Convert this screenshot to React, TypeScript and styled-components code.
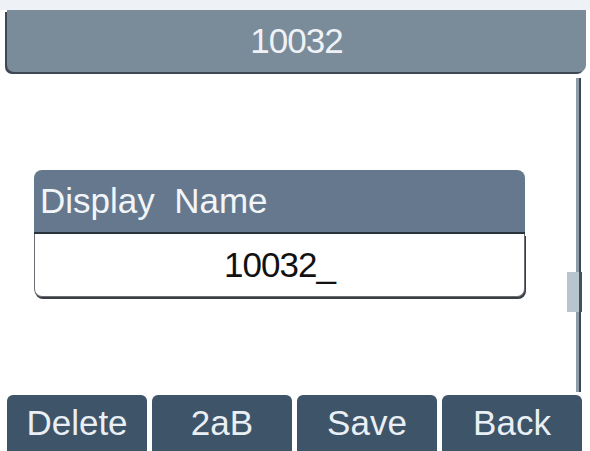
import styled, { createGlobalStyle } from 'styled-components';

const GlobalStyle = createGlobalStyle`
  html, body {
    margin: 0;
    padding: 0;
    background: #ffffff;
  }
  body {
    font-family: 'Liberation Sans', Arial, sans-serif;
  }
`;

const softKeys = ['Delete', '2aB', 'Save', 'Back'];

const App = () => {
  return (
    <>
      <GlobalStyle />
      <Screen>
        <TitleBar>10032</TitleBar>
        <Content>
          <Main>
            <InputBox>
              <InputLabel>{'Display  Name'}</InputLabel>
              <InputField>10032_</InputField>
            </InputBox>
          </Main>
          <ScrollColumn>
            <ScrollTrack>
              <ScrollThumb />
            </ScrollTrack>
          </ScrollColumn>
        </Content>
        <SoftKeyRow>
          {softKeys.map((key) => (
            <SoftKey key={key}>{key}</SoftKey>
          ))}
        </SoftKeyRow>
      </Screen>
    </>
  );
};

export default App;

const Screen = styled.div`
  width: 590px;
  height: 451px;
  display: flex;
  flex-direction: column;
  background: linear-gradient(#eef2f7 0 10px, #ffffff 10px);
  overflow: hidden;
`;

const TitleBar = styled.div`
  margin: 10px 4px 0 7px;
  height: 62px;
  display: flex;
  align-items: center;
  justify-content: center;
  background: #7a8b99;
  border-radius: 0 0 7px 7px;
  box-shadow: -2px 2px 0 #3e4852;
  color: #eef2f6;
  font-size: 35px;
  letter-spacing: -1px;
`;

const Content = styled.div`
  flex: 1;
  display: flex;
`;

const Main = styled.div`
  flex: 1;
  padding: 98px 0 0 34px;
`;

const InputBox = styled.div`
  width: 491px;
  display: flex;
  flex-direction: column;
`;

const InputLabel = styled.div`
  height: 62px;
  padding-left: 6px;
  display: flex;
  align-items: center;
  background: #65788e;
  border-radius: 8px 8px 0 0;
  border-bottom: 2px solid #29313b;
  color: #f2f5f8;
  font-size: 35px;
  white-space: pre;
`;

const InputField = styled.div`
  height: 62px;
  display: flex;
  align-items: center;
  justify-content: center;
  background: #ffffff;
  border: 1px solid #6b6f74;
  border-top: none;
  border-radius: 0 0 8px 8px;
  box-shadow: 1px 2px 0 #3a3d41;
  color: #111111;
  font-size: 35px;
  letter-spacing: -1px;
`;

const ScrollColumn = styled.div`
  width: 27px;
  padding: 6px 0 3px;
  display: flex;
  justify-content: center;
`;

const ScrollTrack = styled.div`
  position: relative;
  width: 3px;
  margin-left: 3px;
  background: #8e9ca8;
  border-right: 2px solid #3c4954;
`;

const ScrollThumb = styled.div`
  position: absolute;
  top: 194px;
  left: -9px;
  width: 12px;
  height: 40px;
  background: #b9c5ce;
  border-right: 3px solid #44525d;
`;

const SoftKeyRow = styled.div`
  height: 56px;
  padding-left: 7px;
  display: grid;
  grid-template-columns: repeat(4, 140px);
  gap: 5px;
`;

const SoftKey = styled.div`
  display: flex;
  align-items: center;
  justify-content: center;
  background: #3e5468;
  border-radius: 6px 6px 0 0;
  color: #e9eff5;
  font-size: 35px;
`;
